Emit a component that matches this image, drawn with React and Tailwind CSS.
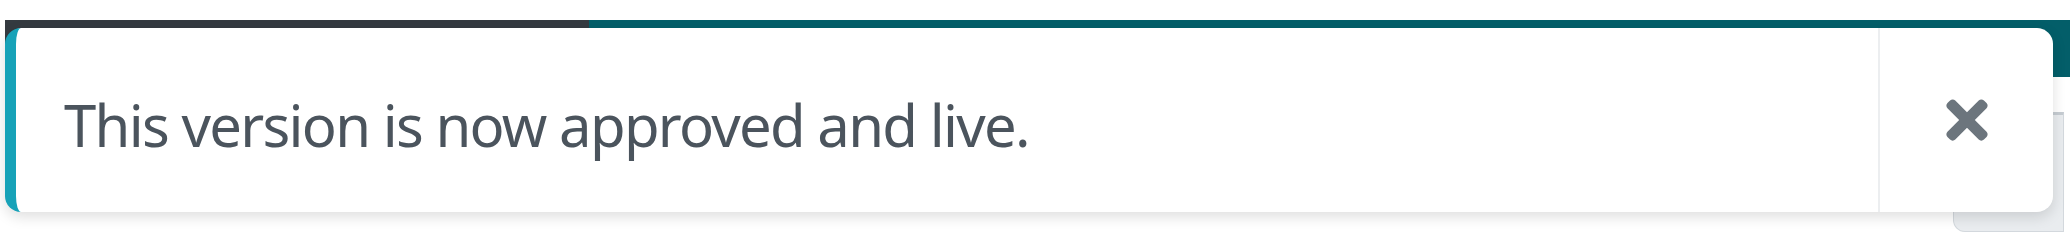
import { FaTimes } from 'react-icons/fa'

export default function App() {
  return (
    <div className="relative w-[2070px] h-[234px] bg-white overflow-hidden" style={{ fontFamily: '"Noto Sans", "Open Sans", sans-serif' }}>
      {/* page header behind the toast */}
      <div className="flex pt-[20px] pl-[5px]">
        <div className="w-[584px] h-[57px] bg-[#343a40]" />
        <div className="flex-1 h-[57px] bg-[#035e69]" />
      </div>

      {/* control peeking out on the right */}
      <div className="absolute left-[1953px] top-[112px] w-[111px] h-[120px] bg-[#e9ecef] border border-[#d3d8dd] border-t-[3px] border-t-[#c6ccd2] rounded-bl-[12px]" />

      {/* toast */}
      <div className="absolute left-[5px] top-[28px] w-[2048px] h-[184px] flex bg-white rounded-[16px] border-l-[11px] border-[#17a2b8] shadow-[0_5px_14px_rgba(0,0,0,0.13)]">
        <div className="flex-1 flex items-center pl-[48px] pt-[10px]">
          <p className="text-[58px] leading-none text-[#4b545d] tracking-[-1.7px]">This version is now approved and live.</p>
        </div>
        <button className="w-[175px] flex items-center justify-center border-l-2 border-[#eceef0]">
          <FaTimes className="w-[60px] h-[60px] text-[#6c757d]" />
        </button>
      </div>
    </div>
  )
}
